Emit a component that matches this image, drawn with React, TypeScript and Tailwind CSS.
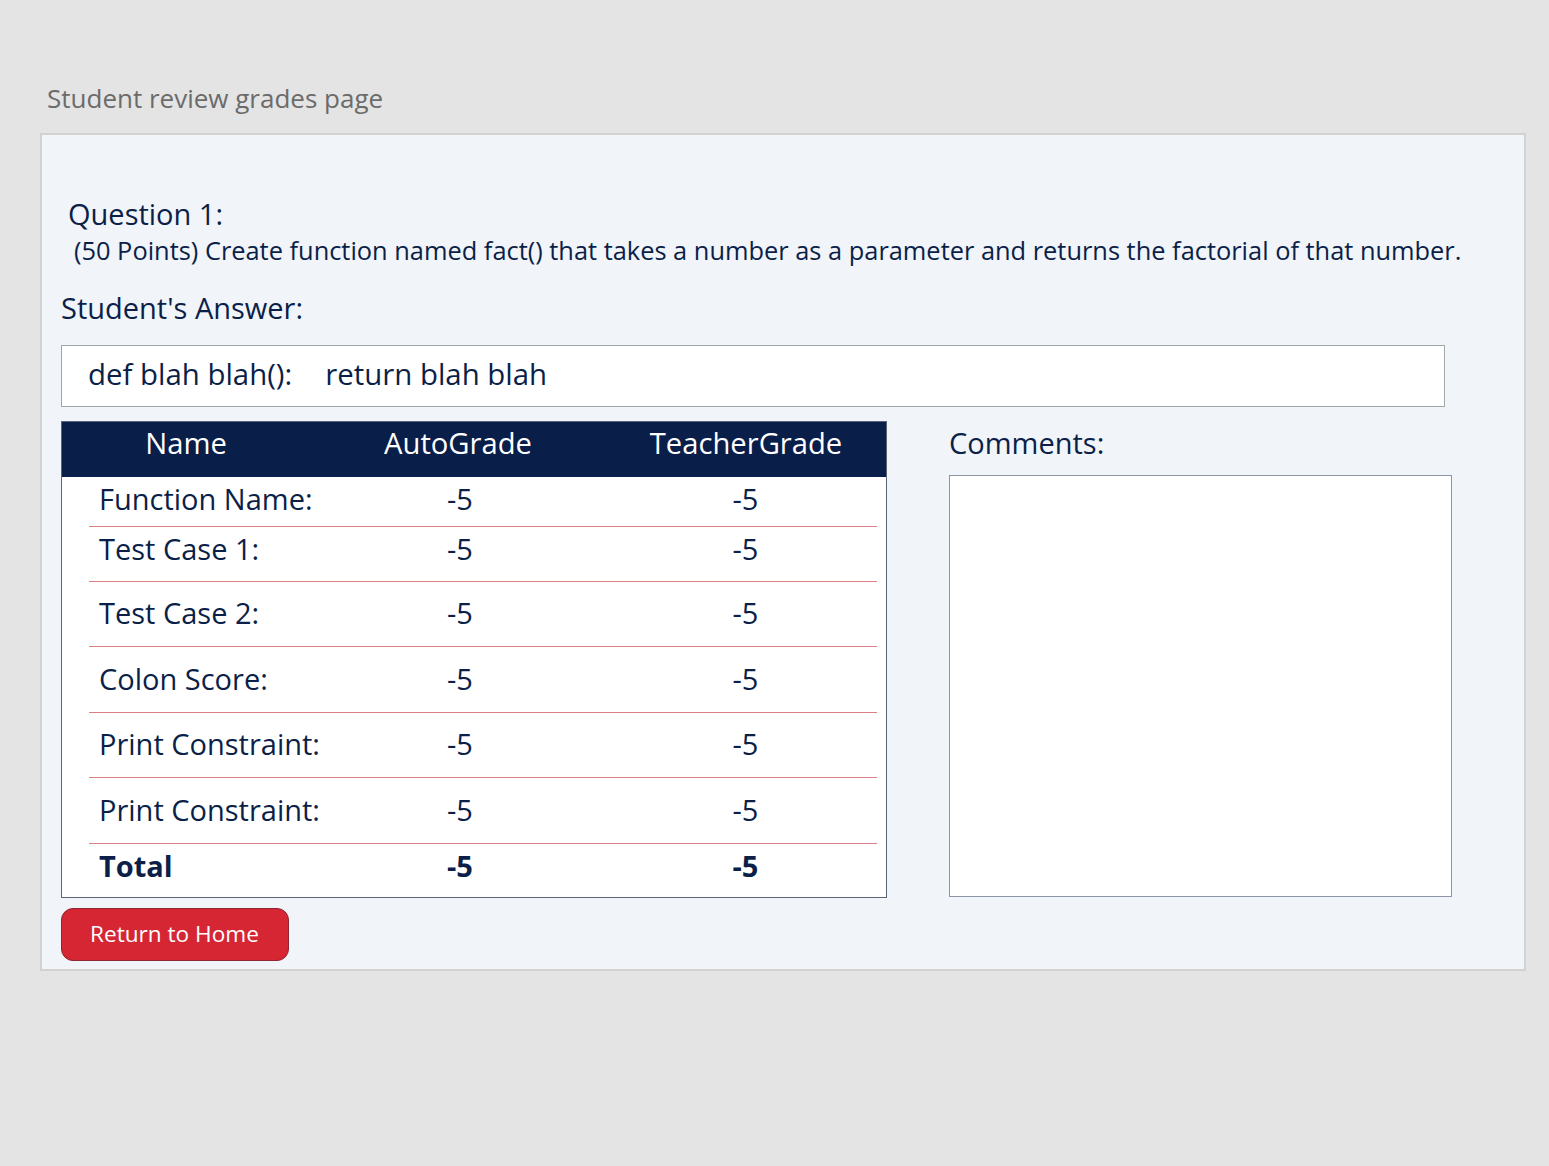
const rows = [
  { label: "Function Name:", h: "h-[50px]", pb: "pb-[12px]" },
  { label: "Test Case 1:", h: "h-[55px]", pb: "pb-[11px]" },
  { label: "Test Case 2:", h: "h-[65px]", pb: "pb-[2px]" },
  { label: "Colon Score:", h: "h-[66px]", pb: "pb-[2px]" },
  { label: "Print Constraint:", h: "h-[65px]", pb: "pb-[2px]" },
  { label: "Print Constraint:", h: "h-[66px]", pb: "pb-[2px]" },
];

export default function App() {
  return (
    <div className="min-h-[1166px] bg-[#e4e4e4] px-[40px] pt-[80px] font-['Open_Sans',sans-serif] text-[#0b1f48]">
      <h1 className="mb-[17px] ml-[7px] text-[26px] leading-[36px] text-[#6b6b6b]">Student review grades page</h1>

      <div className="w-[1486px] border-2 border-[#d2d2d2] bg-[#f1f4f8] pt-[61px] pb-[8px] pl-[19px]">
        <h2 className="ml-[7px] text-[29px] leading-[36px]">Question 1:</h2>
        <p className="mt-[3px] ml-[13px] whitespace-nowrap text-[25.4px] leading-[30px]">
          (50 Points) Create function named fact() that takes a number as a parameter and returns the factorial of that number.
        </p>
        <h3 className="mt-[25px] text-[29px] leading-[36px]">Student's Answer:</h3>

        <div className="mt-[19px] flex h-[62px] w-[1384px] items-center border border-[#a3a6ab] bg-white pb-[4px] pl-[26px] text-[29.4px]">
          <span>def blah blah():</span>
          <span className="ml-[33px]">return blah blah</span>
        </div>

        <div className="mt-[14px] flex items-start">
          <div className="w-[826px] border border-[#5c6577] bg-white">
            <div className="grid h-[55px] grid-cols-[248px_296px_1fr] items-center bg-[#0a1e4a] pb-[16px] text-center text-[29.2px] text-white">
              <span>Name</span>
              <span>AutoGrade</span>
              <span>TeacherGrade</span>
            </div>
            <div className="pl-[27px] pr-[9px]">
              {rows.map((r, i) => (
                <div
                  key={i}
                  className={`grid grid-cols-[221px_300px_1fr] items-center border-b border-[#de7d85] text-[29px] ${r.h} ${r.pb}`}
                >
                  <span className="whitespace-nowrap pl-[10px]">{r.label}</span>
                  <span className="text-center">-5</span>
                  <span className="pl-[4px] text-center">-5</span>
                </div>
              ))}
              <div className="grid h-[53px] grid-cols-[221px_300px_1fr] items-center pb-[10px] text-[29px] font-bold">
                <span className="pl-[10px]">Total</span>
                <span className="text-center">-5</span>
                <span className="pl-[4px] text-center">-5</span>
              </div>
            </div>
          </div>

          <div className="ml-[62px]">
            <p className="-mt-[2px] text-[29px] leading-[48px]">Comments:</p>
            <div className="mt-[8px] h-[422px] w-[503px] border border-[#8c95a6] bg-white" />
          </div>
        </div>

        <button className="mt-[10px] flex h-[53px] w-[228px] items-center rounded-[12px] border border-[#8f2532] bg-[#d62634] pb-[2px] pl-[28px] text-[22.6px] text-white">
          Return to Home
        </button>
      </div>
    </div>
  );
}
